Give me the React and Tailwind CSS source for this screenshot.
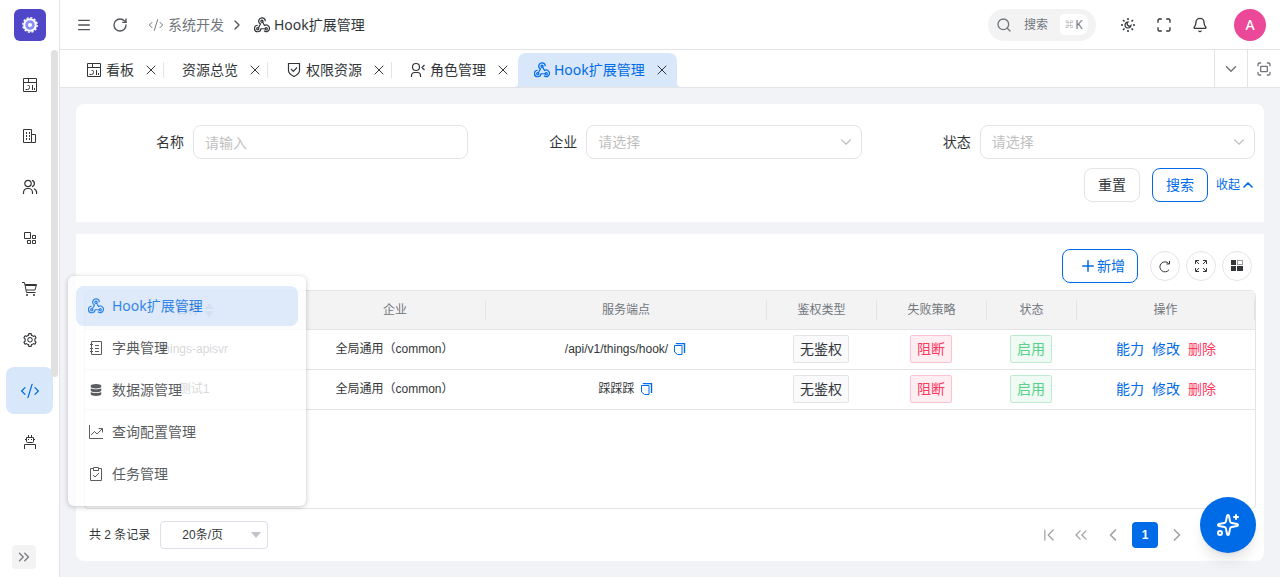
import {
  ChevronDown,
  ChevronLeft,
  ChevronRight,
  ChevronUp,
  ChevronsRight,
  ChevronsLeft,
  ChevronFirst,
  ChevronLast,
  CodeXml,
  Fullscreen,
  Maximize,
  Menu,
  Bell,
  Plus,
  RotateCw,
  Search,
  Sparkles,
  X,
} from "lucide-react";
import { AiOutlineSetting } from "react-icons/ai";
import { FaDatabase } from "react-icons/fa";

const Svg = ({ size = 16, box = 32, width = 2, children }) => (
  <svg
    width={size}
    height={size}
    viewBox={`0 0 ${box} ${box}`}
    fill="none"
    stroke="currentColor"
    strokeWidth={width}
    className="shrink-0"
    aria-hidden="true"
  >
    {children}
  </svg>
);

const WebhookIcon = () => (
  <Svg width={2.4}>
    <path d="M22.500 8.500a6.500 6.500 0 1 0-9.500 5.500L8.500 22" />
    <path d="M7.500 16.500a6.500 6.500 0 1 0 6.500 7h9" />
    <path d="M16.500 9l4.500 8a6.500 6.500 0 1 1-1 10.500" />
    <circle cx="16" cy="8.500" r="2.200" />
    <circle cx="7.500" cy="23.500" r="2.200" />
    <circle cx="24.500" cy="23.500" r="2.200" />
  </Svg>
);

const DashboardIcon = () => (
  <Svg box={16} width={1}>
    <path d="M1.5 1.5h13v13h-13zM1.5 5.5h13M6.5 1.5v4" />
    <path d="M10.5 8v5M12.5 11v2M3.5 12.5h2a2 2 0 0 0 2-2v-1a1 1 0 0 0-1-1h-1" />
  </Svg>
);

const BuildingIcon = () => (
  <Svg box={16} width={1}>
    <path d="M1.5 14.5v-13h8v13zM9.5 6.5h4v8h-4" />
    <path d="M4.5 4v8M7.5 4v8" strokeDasharray="2 1" />
  </Svg>
);

const UsersIcon = () => (
  <Svg box={16} width={1.2}>
    <circle cx="6" cy="4.500" r="3.200" />
    <path d="M1.500 15v-1.500a4 4 0 0 1 4-4h1a4 4 0 0 1 4 4V15M10 1.400a3.200 3.200 0 0 1 0 6.200M12 9.700a4 4 0 0 1 2.600 3.800V15" />
  </Svg>
);

const BlocksIcon = () => (
  <Svg box={16} width={1}>
    <path d="M2.5 2.5h6v6h-6zM10.5 5.5h3v3h-3zM5.5 10.5h3v3h-3zM10.5 10.5h3v3h-3z" />
  </Svg>
);

const CartIcon = () => (
  <Svg box={16} width={1}>
    <path d="M0 1.5h2.500l2 10h9M3 3.500h11.500l-1.500 5.500H4.200M3.500 4.500h10.500" />
    <circle cx="5" cy="14" r="1" fill="currentColor" stroke="none" />
    <circle cx="12" cy="14" r="1" fill="currentColor" stroke="none" />
  </Svg>
);

const BotIcon = () => (
  <Svg box={16} width={1}>
    <path d="M2.5 15v-4.5h11V15M4.5 3.5h7v4a1 1 0 0 1-1 1h-5a1 1 0 0 1-1-1zM6.5 1v2.5M9.5 1v2.5M3 5.5h1.5M11.5 5.5H13" />
    <path d="M6.5 5v1M9.5 5v1" />
  </Svg>
);

const ShieldIcon = () => (
  <Svg box={16} width={1.2}>
    <path d="M2.500 1.500h11v7c0 3-2 4.300-5.500 6-3.500-1.700-5.500-3-5.500-6zM5 7l2.300 2.300L11 5.500" />
  </Svg>
);

const RoleIcon = () => (
  <Svg box={16} width={1.2}>
    <circle cx="6" cy="5" r="3.5" />
    <path d="M1.5 15v-1.5a3 3 0 0 1 3-3h3a3 3 0 0 1 3 3V15M14.5 3l-2.5 2.5L14.5 8" />
  </Svg>
);

const NotebookIcon = () => (
  <Svg box={16} width={1}>
    <path d="M3.5 1.5h10v13h-10zM2 4.5h3M2 8.5h3M2 11.5h3M7 5.5h4M7 8.5h4M7 11.5h4" />
  </Svg>
);

const ChartIcon = () => (
  <Svg box={16} width={1}>
    <path d="M1.5 1v13.5H15M3 11l3.5-3.5L9 10l5-5M10.5 4.5h4v4" />
  </Svg>
);

const TaskIcon = () => (
  <Svg box={16} width={1}>
    <path d="M5.5 2.5h-3v12h11v-12h-3M5.5 1.5h5v3h-5zM5 9l2 2 4-4" />
  </Svg>
);

const ThemeIcon = () => (
  <Svg box={16} width={1.2}>
    <path d="M8 1v2M8 13v2M1 8h2M13 8h2M3 3l1.5 1.5M11.5 11.5L13 13M13 3l-1.5 1.5M4.5 11.5L3 13" strokeWidth="1.5" />
    <path d="M8 5a3 3 0 1 0 3 3.5A2 2 0 0 1 8 5z" />
  </Svg>
);

const CopyIcon = () => (
  <Svg size={12} box={12} width={1}>
    <path d="M2.500 1V.5h8V10" strokeWidth="1.400" />
    <path d="M.5 2.500h7.500v9H3.500L.5 9z" />
  </Svg>
);

const RefreshIcon = () => (
  <Svg size={14} box={14} width={1}>
    <path d="M11 10.700A5 5 0 1 1 10.600 4.500M11.500 2v3h-3" />
  </Svg>
);

const ZoomIcon = () => (
  <Svg size={14} box={14} width={1}>
    <path d="M1.5 5V1.5H5M9 1.5h3.5V5M12.5 9v3.5H9M5 12.5H1.5V9M2 2l3 3M12 2L9 5M12 12L9 9M2 12l3-3" />
  </Svg>
);

const ColumnsIcon = () => (
  <Svg size={14} box={14} width={1}>
    <path d="M1 1h5v5H1zM1 7h5v5H1zM7 7h6v5H7z" fill="currentColor" stroke="none" />
    <path d="M7.5 1.5h5v4h-5z" strokeDasharray="1 1" />
  </Svg>
);

const LogoIcon = () => (
  <svg width="20" height="20" viewBox="0 0 20 20" aria-hidden="true">
    <circle cx="10" cy="10" r="6" fill="#8b8ff8" />
    <circle cx="10" cy="10" r="5.800" fill="none" stroke="#fff" strokeWidth="2" />
    <circle cx="10" cy="10" r="7.200" fill="none" stroke="#fff" strokeWidth="1.400" strokeDasharray="2.200 1.570" />
    <circle cx="10" cy="10" r="2" fill="#fff" />
  </svg>
);

const menus = [
  { name: "看板", icon: <DashboardIcon /> },
  { name: "企业管理", icon: <BuildingIcon /> },
  { name: "用户管理", icon: <UsersIcon /> },
  { name: "应用管理", icon: <BlocksIcon /> },
  { name: "商城", icon: <CartIcon /> },
  { name: "系统设置", icon: <AiOutlineSetting size={16} /> },
  { name: "系统开发", icon: <CodeXml size={20} strokeWidth={1.5} />, active: true },
  { name: "智能体", icon: <BotIcon /> },
];

const subMenus = [
  { name: "Hook扩展管理", icon: <WebhookIcon />, active: true },
  { name: "字典管理", icon: <NotebookIcon /> },
  { name: "数据源管理", icon: <FaDatabase size={12} className="mx-0.5" /> },
  { name: "查询配置管理", icon: <ChartIcon /> },
  { name: "任务管理", icon: <TaskIcon /> },
];

const tabs = [
  { name: "看板", icon: <DashboardIcon /> },
  { name: "资源总览" },
  { name: "权限资源", icon: <ShieldIcon /> },
  { name: "角色管理", icon: <RoleIcon /> },
];

const columns = [
  { title: "名称", width: "w-[220px]", sortable: true },
  { title: "企业", width: "w-[181px]" },
  { title: "服务端点", width: "" },
  { title: "鉴权类型", width: "w-[110px]" },
  { title: "失败策略", width: "w-[110px]" },
  { title: "状态", width: "w-[90px]" },
  { title: "操作", width: "w-[178px]" },
];

const rows = [
  { name: "things-apisvr", endpoint: "/api/v1/things/hook/" },
  { name: "测试1", endpoint: "踩踩踩" },
];

const Sidebar = () => (
  <aside className="relative flex w-15 shrink-0 flex-col border-r border-[#e4e4e7] bg-white">
    <a href="#home" aria-label="首页" className="mx-auto mt-[9px] flex size-8 items-center justify-center rounded-md bg-[#4f46c8]">
      <LogoIcon />
    </a>
    <nav className="mt-5 flex flex-1 flex-col gap-1 px-1.5">
      {menus.map((m) => (
        <a
          key={m.name}
          href="#menu"
          aria-label={m.name}
          className={
            m.active
              ? "flex h-[47px] items-center justify-center rounded-lg bg-[#d9e7fb] text-[#006be6]"
              : "flex h-[47px] items-center justify-center rounded-lg"
          }
        >
          {m.icon}
        </a>
      ))}
    </nav>
    <button aria-label="展开" className="mb-2 ml-3 flex size-6 items-center justify-center rounded-sm bg-[#f3f3f4] text-[#808388]">
      <ChevronsRight size={18} strokeWidth={2} />
    </button>
    {/* scrollbar thumb */}
    <div className="absolute top-[50px] right-px h-[327px] w-[7px] rounded-full bg-[#e1e1e2]" />
  </aside>
);

const Header = () => (
  <header className="flex h-[50px] shrink-0 items-center border-b border-[#e4e4e7] bg-white pr-3.5 pl-4">
    <button aria-label="菜单" className="flex w-4 justify-center text-[#505357]">
      <Menu size={16} strokeWidth={2} />
    </button>
    <button aria-label="刷新" className="ml-5 flex w-4 justify-center text-[#505357]">
      <RotateCw size={16} strokeWidth={2} />
    </button>
    <nav className="ml-5 flex items-center">
      <a href="#dev" className="flex items-center gap-1 text-[#71767c]">
        <CodeXml size={16} strokeWidth={1.5} />
        系统开发
      </a>
      <ChevronRight size={16} strokeWidth={2} className="mx-[5px] text-[#505357]" />
      <span className="ml-1 flex items-center gap-1">
        <WebhookIcon />
        Hook扩展管理
      </span>
    </nav>
    <button className="ml-auto flex h-8 items-center rounded-full bg-[#f3f3f4] px-2 text-xs text-[#71767c]">
      <Search size={16} strokeWidth={2} />
      <span className="ml-3">搜索</span>
      <kbd className="ml-3 flex h-[21px] w-7 items-center justify-center gap-0.5 rounded-l-sm rounded-r-lg bg-white font-['Noto_Sans','Noto_Sans_CJK_SC',sans-serif] text-xs">
        <span className="text-[8px] font-bold">⌘</span>K
      </kbd>
    </button>
    <div className="ml-6 flex items-center gap-5">
      <button aria-label="主题">
        <ThemeIcon />
      </button>
      <button aria-label="全屏">
        <Maximize size={16} strokeWidth={2} />
      </button>
      <button aria-label="通知">
        <Bell size={16} strokeWidth={2} />
      </button>
    </div>
    <button className="ml-[26px] flex size-8 items-center justify-center rounded-full bg-[#ec4899] font-medium text-white">A</button>
  </header>
);

const TabBar = () => (
  <div className="flex h-[38px] shrink-0 items-end border-b border-[#e4e4e7] bg-white pl-2">
    {tabs.map((t, i) => (
      <div key={t.name} className="flex h-[34px] items-center pl-[18px]">
        <a href="#tab" className="flex items-center gap-1">
          {t.icon}
          {t.name}
        </a>
        <button aria-label="关闭" className="mr-1 ml-[9px]">
          <X size={16} strokeWidth={1.5} />
        </button>
        <span className={i === 3 ? "h-4 w-px" : "h-4 w-px bg-[#e4e4e7]"} />
      </div>
    ))}
    <div className="relative ml-0.5 flex h-[34px] items-center rounded-t-lg bg-[#d9e7fb] pr-[7px] pl-4">
      <svg className="absolute bottom-0 -left-1 text-[#d9e7fb]" width="4" height="4" viewBox="0 0 4 4" fill="currentColor">
        <path d="M4 0v4H0a4 4 0 0 0 4-4z" />
      </svg>
      <svg className="absolute -right-1 bottom-0 text-[#d9e7fb]" width="4" height="4" viewBox="0 0 4 4" fill="currentColor">
        <path d="M0 0v4h4a4 4 0 0 1-4-4z" />
      </svg>
      <a href="#hook" className="flex items-center gap-1 text-[#006be6]">
        <WebhookIcon />
        Hook扩展管理
      </a>
      <button aria-label="关闭" className="ml-[9px]">
        <X size={16} strokeWidth={1.5} />
      </button>
    </div>
    <div className="ml-auto flex self-stretch text-[#71767c]">
      <button aria-label="更多" className="flex w-[33px] items-center justify-center border-l border-[#e4e4e7]">
        <ChevronDown size={18} strokeWidth={2} />
      </button>
      <button aria-label="最大化" className="flex w-[33px] items-center justify-center border-l border-[#e4e4e7]">
        <Fullscreen size={16} strokeWidth={2} />
      </button>
    </div>
  </div>
);

const SelectField = ({ id, label }) => (
  <div className="flex items-center gap-[9px]">
    <label htmlFor={id} className="w-[99px] shrink-0 text-right">
      {label}
    </label>
    <div className="relative flex-1">
      <select id={id} className="h-[34px] w-full appearance-none rounded-lg border border-[#e4e4e7] bg-white px-[11px] text-[#bfbfbf]">
        <option>请选择</option>
      </select>
      <ChevronDown size={18} strokeWidth={1.5} className="pointer-events-none absolute top-2 right-[7px] text-[#bfbfbf]" />
    </div>
  </div>
);

const SearchForm = () => (
  <form className="shrink-0 rounded-t-lg bg-white px-[9px] pt-[21px] pb-5">
    <div className="grid grid-cols-3 gap-2.5">
      <div className="flex items-center gap-[9px]">
        <label htmlFor="name" className="w-[99px] shrink-0 text-right">
          名称
        </label>
        <input
          id="name"
          placeholder="请输入"
          className="h-[34px] min-w-0 flex-1 rounded-lg border border-[#e4e4e7] px-[11px] placeholder:text-[#bfbfbf]"
        />
      </div>
      <SelectField id="company" label="企业" />
      <SelectField id="status" label="状态" />
    </div>
    <div className="mt-[9px] flex items-center justify-end">
      <button type="reset" className="h-[34px] w-14 rounded-lg border border-[#e4e4e7]">
        重置
      </button>
      <button type="button" className="ml-3 h-[34px] w-14 rounded-lg border border-[#006be6] text-[#006be6]">
        搜索
      </button>
      <button type="button" className="ml-2 flex items-center text-xs text-[#006be6]">
        收起
        <ChevronUp size={16} strokeWidth={2.5} className="-mr-px" />
      </button>
    </div>
  </form>
);

const HookTable = () => (
  <div className="mx-2 min-h-0 flex-1 overflow-hidden rounded-t-md rounded-b-sm border border-[#e4e4e7]">
    <table className="w-full table-fixed text-center font-['Liberation_Sans','Noto_Sans_CJK_SC',sans-serif] text-xs">
      <thead>
        <tr className="h-[38px] border-b border-[#e4e4e7] bg-[#f3f3f4] text-[#71767c]">
          {columns.map((c) => (
            <th key={c.title} className={`p-0 font-normal ${c.width}`}>
              <div className="flex h-5 items-center justify-center gap-1 border-r border-[#e4e4e7]">
                {c.title}
                {c.sortable && (
                  <svg width="10" height="14" viewBox="0 0 10 14" fill="#c0c4cc" aria-hidden="true">
                    <path d="M5 0l4.500 6h-9zM5 14L.5 8h9z" />
                  </svg>
                )}
              </div>
            </th>
          ))}
        </tr>
      </thead>
      <tbody>
        {rows.map((r) => (
          <tr key={r.name} className="h-10 border-b border-[#e4e4e7]">
            <td className="pr-0.5">{r.name}</td>
            <td className="pr-0.5">全局通用（common）</td>
            <td className="pr-0.5">
              <div className="flex items-center justify-center gap-1.5">
                {r.endpoint}
                <button aria-label="复制" className="text-[#006be6]">
                  <CopyIcon />
                </button>
              </div>
            </td>
            <td className="pr-0.5">
              <span className="inline-flex h-7 items-center rounded-xs border border-[#e4e4e7] bg-[#fafafc] px-1.5 text-sm">无鉴权</span>
            </td>
            <td className="pr-0.5">
              <span className="inline-flex h-7 items-center rounded-xs border border-[#fcc3cf] bg-[#ffeef1] px-1.5 text-sm text-[#ff3860]">阻断</span>
            </td>
            <td className="pr-0.5">
              <span className="inline-flex h-7 items-center rounded-xs border border-[#bfebd0] bg-[#eefaf3] px-1.5 text-sm text-[#57d188]">启用</span>
            </td>
            <td>
              <div className="flex items-center justify-center gap-2 text-sm text-[#006be6]">
                <button>能力</button>
                <button>修改</button>
                <button className="text-[#ff3860]">删除</button>
              </div>
            </td>
          </tr>
        ))}
      </tbody>
    </table>
  </div>
);

const Pager = () => (
  <div className="flex h-[52px] shrink-0 items-center pr-2.5 pl-2 font-['Liberation_Sans','Noto_Sans_CJK_SC',sans-serif] text-xs">
    <span className="ml-[5px]">共 2 条记录</span>
    <div className="relative ml-2.5">
      <select aria-label="每页条数" className="h-7 w-[108px] appearance-none rounded-sm border border-[#dcdfe6] bg-white pl-[21px]">
        <option>20条/页</option>
      </select>
      <svg className="pointer-events-none absolute top-[11px] right-[7px]" width="10" height="6" viewBox="0 0 10 6" fill="#c0c4cc">
        <path d="M0 0h10L5 6z" />
      </svg>
    </div>
    <div className="ml-auto flex items-center gap-1.5 text-[#a0a2a6]">
      <button aria-label="首页" className="flex size-[26px] items-center justify-center">
        <ChevronFirst size={20} strokeWidth={1.5} />
      </button>
      <button aria-label="向前" className="flex size-[26px] items-center justify-center">
        <ChevronsLeft size={20} strokeWidth={1.5} />
      </button>
      <button aria-label="上一页" className="flex size-[26px] items-center justify-center">
        <ChevronLeft size={20} strokeWidth={2} />
      </button>
      <button className="size-[26px] rounded-sm bg-[#006be6] font-bold text-white">1</button>
      <button aria-label="下一页" className="flex size-[26px] items-center justify-center">
        <ChevronRight size={20} strokeWidth={2} />
      </button>
      <button aria-label="向后" className="flex size-[26px] items-center justify-center">
        <ChevronsRight size={20} strokeWidth={1.5} />
      </button>
      <button aria-label="末页" className="flex size-[26px] items-center justify-center">
        <ChevronLast size={20} strokeWidth={1.5} />
      </button>
    </div>
  </div>
);

const SubMenu = () => (
  <div className="absolute top-[276px] left-[68px] flex h-[230px] w-[238px] flex-col gap-0.5 rounded-md bg-white px-2 pt-2.5 opacity-80 shadow-[0_1px_5px_rgba(0,0,0,0.28)]">
    {subMenus.map((m) => (
      <a
        key={m.name}
        href="#sub"
        className={
          m.active
            ? "flex h-10 items-center gap-2 rounded-lg bg-[#d9e7fb] px-3 text-[#006be6]"
            : "flex h-10 items-center gap-2 rounded-lg px-3"
        }
      >
        {m.icon}
        {m.name}
      </a>
    ))}
  </div>
);

export default function App() {
  return (
    <div className="relative flex h-screen overflow-hidden bg-[#f1f3f6] font-['Noto_Sans','Noto_Sans_CJK_SC',sans-serif] text-sm text-[#323639]">
      <Sidebar />
      <div className="flex min-w-0 flex-1 flex-col">
        <Header />
        <TabBar />
        <main className="flex min-h-0 flex-1 flex-col gap-3 p-4">
          <SearchForm />
          <section className="flex min-h-0 flex-1 flex-col rounded-b-lg bg-white">
            <div className="flex h-14 shrink-0 items-center justify-end gap-1.5 pt-2 pr-3">
              <button className="mr-1.5 flex h-[34px] w-[76px] items-center justify-center rounded-lg border border-[#006be6] pl-1 text-[#006be6]">
                <Plus size={18} />
                新增
              </button>
              <button aria-label="刷新" className="flex size-[30px] items-center justify-center rounded-full border border-[#e4e4e7]">
                <RefreshIcon />
              </button>
              <button aria-label="全屏" className="flex size-[30px] items-center justify-center rounded-full border border-[#e4e4e7]">
                <ZoomIcon />
              </button>
              <button aria-label="列设置" className="flex size-[30px] items-center justify-center rounded-full border border-[#e4e4e7]">
                <ColumnsIcon />
              </button>
            </div>
            <HookTable />
            <Pager />
          </section>
        </main>
      </div>
      <SubMenu />
      <button
        aria-label="AI 助手"
        className="absolute right-6 bottom-6 flex size-14 items-center justify-center rounded-full bg-[#006be6] text-white shadow-lg"
      >
        <Sparkles size={24} />
      </button>
    </div>
  );
}
